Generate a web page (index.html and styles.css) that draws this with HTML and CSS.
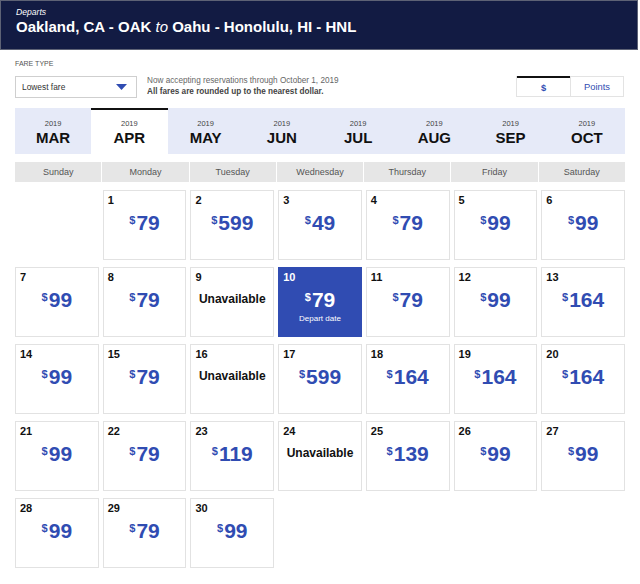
FILE: index.html
```html
<!DOCTYPE html>
<html>
<head>
<meta charset="utf-8">
<link rel="stylesheet" href="styles.css">
</head>
<body>
<div class="header">
  <div class="departs">Departs</div>
  <div class="route">Oakland, CA - OAK <i>to</i> Oahu - Honolulu, HI - HNL</div>
</div>
<div class="page">
  <div class="controls">
    <div class="fare">
      <div class="label">FARE TYPE</div>
      <div class="select">
        <span>Lowest fare</span>
        <svg class="caret" width="11" height="6" viewBox="0 0 11 6"><polygon points="0,0 11,0 5.5,6" fill="#304cb2"/></svg>
      </div>
    </div>
    <div class="notes">
      <div>Now accepting reservations through October 1, 2019</div>
      <div class="strong">All fares are rounded up to the nearest dollar.</div>
    </div>
    <div class="toggle">
      <div class="opt active">$</div>
      <div class="opt">Points</div>
    </div>
  </div>
  <div class="months">
    <div class="month"><span class="yr">2019</span><span class="mo">MAR</span></div>
    <div class="month current"><span class="yr">2019</span><span class="mo">APR</span></div>
    <div class="month"><span class="yr">2019</span><span class="mo">MAY</span></div>
    <div class="month"><span class="yr">2019</span><span class="mo">JUN</span></div>
    <div class="month"><span class="yr">2019</span><span class="mo">JUL</span></div>
    <div class="month"><span class="yr">2019</span><span class="mo">AUG</span></div>
    <div class="month"><span class="yr">2019</span><span class="mo">SEP</span></div>
    <div class="month"><span class="yr">2019</span><span class="mo">OCT</span></div>
  </div>
  <div class="weekdays">
    <div>Sunday</div><div>Monday</div><div>Tuesday</div><div>Wednesday</div><div>Thursday</div><div>Friday</div><div>Saturday</div>
  </div>
  <div class="grid">
    <div class="blank"></div>
    <div class="day"><span class="num">1</span><span class="price"><span class="cur">$</span>79</span></div>
    <div class="day"><span class="num">2</span><span class="price"><span class="cur">$</span>599</span></div>
    <div class="day"><span class="num">3</span><span class="price"><span class="cur">$</span>49</span></div>
    <div class="day"><span class="num">4</span><span class="price"><span class="cur">$</span>79</span></div>
    <div class="day"><span class="num">5</span><span class="price"><span class="cur">$</span>99</span></div>
    <div class="day"><span class="num">6</span><span class="price"><span class="cur">$</span>99</span></div>

    <div class="day"><span class="num">7</span><span class="price"><span class="cur">$</span>99</span></div>
    <div class="day"><span class="num">8</span><span class="price"><span class="cur">$</span>79</span></div>
    <div class="day"><span class="num">9</span><span class="na">Unavailable</span></div>
    <div class="day selected"><span class="num">10</span><span class="price"><span class="cur">$</span>79</span><span class="tag">Depart date</span></div>
    <div class="day"><span class="num">11</span><span class="price"><span class="cur">$</span>79</span></div>
    <div class="day"><span class="num">12</span><span class="price"><span class="cur">$</span>99</span></div>
    <div class="day"><span class="num">13</span><span class="price"><span class="cur">$</span>164</span></div>

    <div class="day"><span class="num">14</span><span class="price"><span class="cur">$</span>99</span></div>
    <div class="day"><span class="num">15</span><span class="price"><span class="cur">$</span>79</span></div>
    <div class="day"><span class="num">16</span><span class="na">Unavailable</span></div>
    <div class="day"><span class="num">17</span><span class="price"><span class="cur">$</span>599</span></div>
    <div class="day"><span class="num">18</span><span class="price"><span class="cur">$</span>164</span></div>
    <div class="day"><span class="num">19</span><span class="price"><span class="cur">$</span>164</span></div>
    <div class="day"><span class="num">20</span><span class="price"><span class="cur">$</span>164</span></div>

    <div class="day"><span class="num">21</span><span class="price"><span class="cur">$</span>99</span></div>
    <div class="day"><span class="num">22</span><span class="price"><span class="cur">$</span>79</span></div>
    <div class="day"><span class="num">23</span><span class="price"><span class="cur">$</span>119</span></div>
    <div class="day"><span class="num">24</span><span class="na">Unavailable</span></div>
    <div class="day"><span class="num">25</span><span class="price"><span class="cur">$</span>139</span></div>
    <div class="day"><span class="num">26</span><span class="price"><span class="cur">$</span>99</span></div>
    <div class="day"><span class="num">27</span><span class="price"><span class="cur">$</span>99</span></div>

    <div class="day"><span class="num">28</span><span class="price"><span class="cur">$</span>99</span></div>
    <div class="day"><span class="num">29</span><span class="price"><span class="cur">$</span>79</span></div>
    <div class="day"><span class="num">30</span><span class="price"><span class="cur">$</span>99</span></div>
  </div>
</div>
</body>
</html>
```

FILE: styles.css
```css
* { box-sizing: border-box; }
html, body { margin: 0; padding: 0; background: #fff; }
body {
  width: 640px;
  font-family: "Liberation Sans", Arial, sans-serif;
  color: #222;
}
.header {
  width: 638px;
  height: 50px;
  background: #121b43;
  border: 1px solid #5d6275;
  color: #fff;
  padding: 6px 0 0 15px;
}
.departs {
  font-size: 8.6px;
  font-style: italic;
  line-height: 10px;
}
.route {
  font-size: 15px;
  font-weight: bold;
  line-height: 18px;
  margin-top: 1px;
}
.route i { font-weight: normal; }

.page {
  width: 640px;
  padding: 0 15px;
}
.controls {
  display: flex;
  align-items: flex-start;
  margin-top: 9px;
}
.label {
  font-size: 7px;
  line-height: 9px;
  color: #555;
  margin-bottom: 8px;
}
.select {
  width: 122px;
  height: 22px;
  border: 1px solid #cfcfcf;
  display: flex;
  align-items: center;
  justify-content: space-between;
  padding: 0 9px 0 6px;
  font-size: 8.4px;
  color: #333;
}
.notes {
  margin-top: 16px;
  margin-left: 10px;
  font-size: 8.2px;
  line-height: 11px;
  color: #666;
}
.notes .strong { font-weight: bold; color: #444; }
.toggle {
  margin-left: auto;
  margin-right: 1px;
  margin-top: 17px;
  display: flex;
  height: 21px;
  border: 1px solid #e3e3e3;
  border-top: none;
}
.opt {
  width: 53px;
  display: flex;
  align-items: center;
  justify-content: center;
  font-size: 9.4px;
  color: #304cb2;
  border-top: 1px solid #e3e3e3;
}
.opt + .opt { border-left: 1px solid #e3e3e3; }
.opt.active {
  font-weight: bold;
  border-top: 2px solid #111;
}

.months {
  display: grid;
  grid-template-columns: repeat(8, 1fr);
  height: 46px;
  margin-top: 10px;
  background: #e6eaf8;
}
.month {
  display: flex;
  flex-direction: column;
  align-items: center;
  padding-top: 11px;
}
.month.current {
  background: #fff;
  box-shadow: inset 0 2px 0 #111;
}
.yr {
  font-size: 7.5px;
  line-height: 9px;
  color: #444;
}
.mo {
  font-size: 15px;
  font-weight: bold;
  line-height: 17px;
  color: #111;
  margin-top: 1px;
}

.weekdays {
  display: grid;
  grid-template-columns: repeat(7, 1fr);
  column-gap: 1px;
  margin-top: 8px;
}
.weekdays div {
  height: 20px;
  background: #e6e6e6;
  font-size: 9px;
  color: #555;
  display: flex;
  align-items: center;
  justify-content: center;
}

.grid {
  display: grid;
  grid-template-columns: repeat(7, 1fr);
  grid-auto-rows: 70px;
  column-gap: 4px;
  row-gap: 7px;
  margin-top: 8px;
}
.day {
  border: 1px solid #e2e2e2;
  padding: 3px 4px 0;
  display: flex;
  flex-direction: column;
}
.num {
  font-size: 11px;
  font-weight: bold;
  line-height: 13px;
  color: #111;
}
.price {
  align-self: center;
  margin-top: 4px;
  font-size: 21px;
  font-weight: bold;
  line-height: 24px;
  color: #304cb2;
  white-space: nowrap;
}
.cur {
  display: inline-block;
  vertical-align: top;
  font-size: 11px;
  line-height: 12px;
  margin-top: 3px;
  margin-right: 1px;
}
.na {
  align-self: center;
  margin-top: 8px;
  font-size: 12px;
  font-weight: bold;
  line-height: 14px;
  color: #111;
}
.tag {
  align-self: center;
  margin-top: 2px;
  font-size: 8px;
  line-height: 10px;
  color: #fff;
}
.day.selected {
  background: #304cb2;
  border-color: #304cb2;
}
.day.selected .num,
.day.selected .price { color: #fff; }
```
